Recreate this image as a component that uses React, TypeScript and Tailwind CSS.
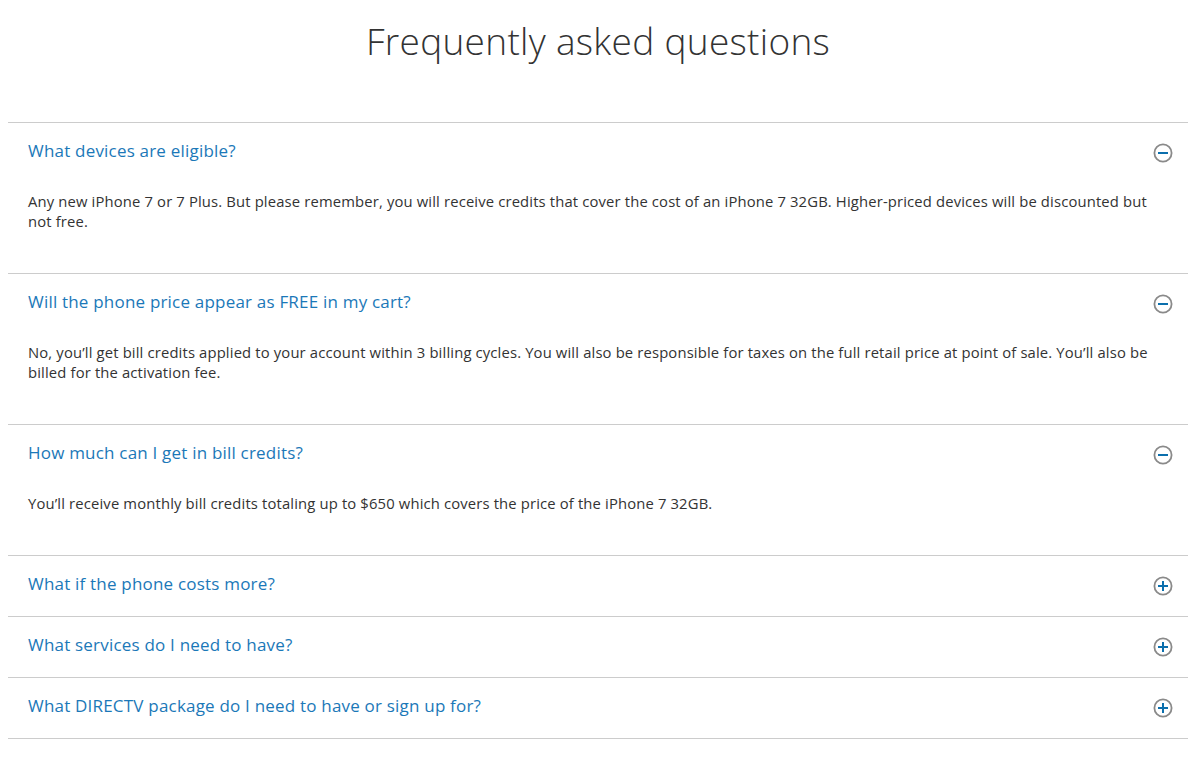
import { useState } from "react";

type Faq = {
  q: string;
  a?: string;
};

const faqs: Faq[] = [
  {
    q: "What devices are eligible?",
    a: "Any new iPhone 7 or 7 Plus. But please remember, you will receive credits that cover the cost of an iPhone 7 32GB. Higher-priced devices will be discounted but not free.",
  },
  {
    q: "Will the phone price appear as FREE in my cart?",
    a: "No, you\u2019ll get bill credits applied to your account within 3 billing cycles. You will also be responsible for taxes on the full retail price at point of sale. You\u2019ll also be billed for the activation fee.",
  },
  {
    q: "How much can I get in bill credits?",
    a: "You\u2019ll receive monthly bill credits totaling up to $650 which covers the price of the iPhone 7 32GB.",
  },
  { q: "What if the phone costs more?", a: "" },
  { q: "What services do I need to have?", a: "" },
  { q: "What DIRECTV package do I need to have or sign up for?", a: "" },
];

function ToggleIcon({ open }: { open: boolean }) {
  return (
    <svg width="20" height="20" viewBox="0 0 20 20" className="mt-[3px] shrink-0">
      <circle cx="10" cy="10" r="8.6" fill="none" stroke="#8a8a8a" strokeWidth="1.8" />
      <rect x="5" y="9" width="10" height="2" fill="#0b6fad" />
      {!open && <rect x="9" y="5" width="2" height="10" fill="#0b6fad" />}
    </svg>
  );
}

export default function App() {
  const [openIds, setOpenIds] = useState<number[]>([0, 1, 2]);

  const toggle = (i: number) => {
    setOpenIds((prev) =>
      prev.includes(i) ? prev.filter((v) => v !== i) : [...prev, i]
    );
  };

  return (
    <div className="min-h-screen bg-white pl-2 pr-[11px] font-['Open_Sans','Liberation_Sans',sans-serif] text-[#333]">
      <h1 className="pt-[17px] text-center text-[37px] font-light leading-[48px] tracking-[0.3px] text-[#333]">
        Frequently asked questions
      </h1>

      <div className="mt-[57px] border-b border-[#cccccc]">
        {faqs.map((item, i) => {
          const open = openIds.includes(i);
          return (
            <div key={i} className="border-t border-[#cccccc]">
              <button
                type="button"
                onClick={() => toggle(i)}
                className="flex h-[60px] w-full items-start justify-between pl-5 pr-[15px] pt-[17px] text-left"
              >
                <span className="text-[17px] leading-[22px] tracking-[0.2px] text-[#1b78b8]">
                  {item.q}
                </span>
                <ToggleIcon open={open} />
              </button>
              {open && (
                <div className="pb-[42px] pl-5 pr-7 pt-2 text-[14.8px] leading-5 tracking-[0.15px] text-[#333]">
                  {item.a}
                </div>
              )}
            </div>
          );
        })}
      </div>
    </div>
  );
}
